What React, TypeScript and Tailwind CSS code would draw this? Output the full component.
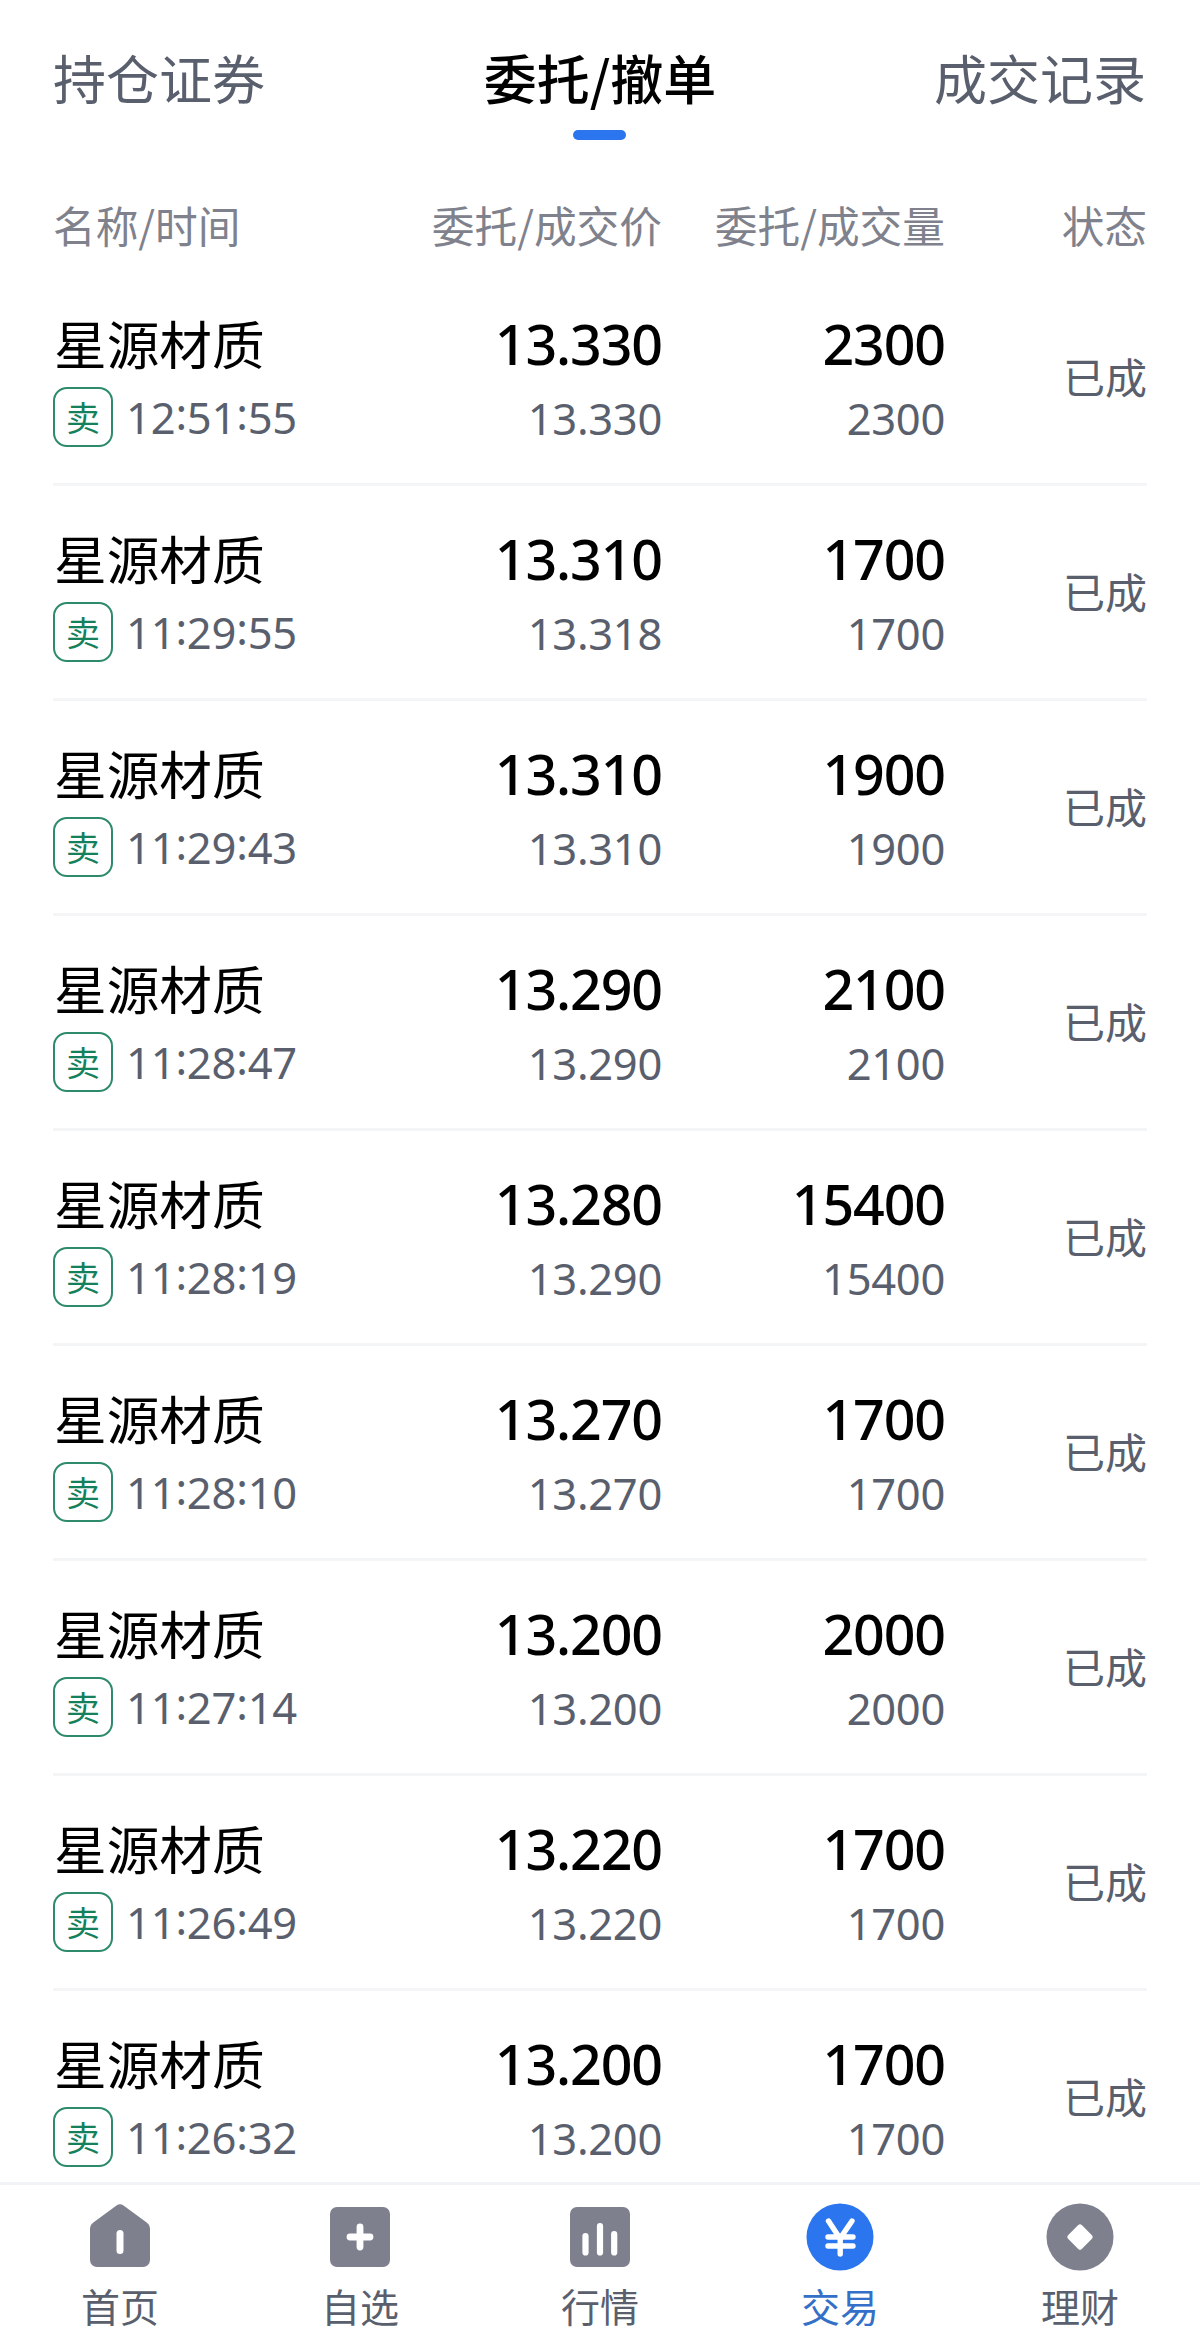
import React from 'react';

type Order = { time: string; price: string; dealPrice: string; qty: string };

const ORDERS: Order[] = [
  { time: '12:51:55', price: '13.330', dealPrice: '13.330', qty: '2300' },
  { time: '11:29:55', price: '13.310', dealPrice: '13.318', qty: '1700' },
  { time: '11:29:43', price: '13.310', dealPrice: '13.310', qty: '1900' },
  { time: '11:28:47', price: '13.290', dealPrice: '13.290', qty: '2100' },
  { time: '11:28:19', price: '13.280', dealPrice: '13.290', qty: '15400' },
  { time: '11:28:10', price: '13.270', dealPrice: '13.270', qty: '1700' },
  { time: '11:27:14', price: '13.200', dealPrice: '13.200', qty: '2000' },
  { time: '11:26:49', price: '13.220', dealPrice: '13.220', qty: '1700' },
  { time: '11:26:32', price: '13.200', dealPrice: '13.200', qty: '1700' },
];

const COLUMNS = 'grid grid-cols-[326px_283px_283px_1fr] px-[53px]';

function Time({ value }: { value: string }) {
  return (
    <span className="text-[43.5px] leading-[74px] tracking-[-0.2px] font-['Noto_Sans']">
      {value.split(':').map((part, i) => (
        <React.Fragment key={i}>
          {i > 0 && <span className="relative -top-[4px]">:</span>}
          {part}
        </React.Fragment>
      ))}
    </span>
  );
}

function Amounts({ ordered, filled }: { ordered: string; filled: string }) {
  return (
    <div className="text-right font-['Noto_Sans']">
      <div className="pt-px text-[55.5px] leading-[74px] font-medium tracking-[-1.1px] text-black">{ordered}</div>
      <div className="text-[43.5px] leading-[74px] tracking-[-0.3px]">{filled}</div>
    </div>
  );
}

function OrderRow({ order }: { order: Order }) {
  return (
    <li className="h-[215px] shrink-0">
      <div className={`${COLUMNS} h-[212px] pt-[35px]`}>
        <div>
          <div className="h-[74px] pl-px text-[52.7px] leading-[72px] text-black">星源材质</div>
          <div className="flex h-[74px] items-center">
            <span className="flex size-[60px] items-center justify-center rounded-[14px] border-2 border-[#2d8a6b] text-[34px] leading-none text-[#14805c]">
              卖
            </span>
            <span className="ml-[13px]">
              <Time value={order.time} />
            </span>
          </div>
        </div>
        <Amounts ordered={order.price} filled={order.dealPrice} />
        <Amounts ordered={order.qty} filled={order.qty} />
        <div className="flex h-[139px] items-center justify-end text-[42px]">已成</div>
      </div>
      <div className="mx-[53px] h-[3px] bg-[#f3f5f7]" />
    </li>
  );
}

const ICONS: Record<string, React.ReactNode> = {
  首页: (
    <>
      <path d="M31.5 5.600a6 6 0 0 1 7 0L62 22.700a7 7 0 0 1 3 5.600V60a7 7 0 0 1-7 7H12a7 7 0 0 1-7-7V28.300a7 7 0 0 1 3-5.600z" fill="currentColor" />
      <path d="M35 33.500v17" stroke="#fff" strokeWidth="7" strokeLinecap="round" />
    </>
  ),
  自选: (
    <>
      <rect x="5" y="7" width="60" height="60" rx="7" fill="currentColor" />
      <path d="M35 27v20M25 37h20" stroke="#fff" strokeWidth="6.800" strokeLinecap="round" />
    </>
  ),
  行情: (
    <>
      <rect x="5" y="7" width="60" height="60" rx="7" fill="currentColor" />
      <path d="M20.500 36v16.500M35 26v26.500M49.200 34v18.500" stroke="#fff" strokeWidth="6.200" strokeLinecap="round" />
    </>
  ),
  交易: (
    <>
      <circle cx="35" cy="37" r="33.500" fill="currentColor" />
      <path
        d="M23.500 21 35 38.500 47 21M35.200 38v16M23 37h25M23 46h25"
        fill="none"
        stroke="#fff"
        strokeWidth="5.400"
        strokeLinecap="round"
        strokeLinejoin="round"
      />
    </>
  ),
  理财: (
    <>
      <circle cx="35" cy="37" r="33.500" fill="currentColor" />
      <rect x="25.300" y="27.300" width="19.400" height="19.400" rx="2.500" fill="#fff" transform="rotate(45 35 37)" />
    </>
  ),
};

const NAV = ['首页', '自选', '行情', '交易', '理财'];

export default function App() {
  return (
    <div className="flex h-[2347px] w-[1200px] flex-col overflow-hidden bg-white font-['Noto_Sans_CJK_SC',sans-serif] text-[#5a5f6e]">
      <header className="grid h-[180px] shrink-0 grid-cols-3 px-[53px] text-[53px] leading-[80px]">
        <div className="pt-[37px]">持仓证券</div>
        <div className="flex flex-col items-center pt-[37px]">
          <span className="font-medium whitespace-nowrap text-black">委托/撤单</span>
          <span className="mt-[13px] h-[10px] w-[53px] rounded-full bg-[#2b75ee]" />
        </div>
        <div className="pt-[37px] pr-px text-right">成交记录</div>
      </header>

      <div className={`${COLUMNS} h-[91px] shrink-0 pt-[14px] text-[42.7px] leading-[60px] text-[#7f828d]`}>
        <div>名称/时间</div>
        <div className="text-right">委托/成交价</div>
        <div className="text-right">委托/成交量</div>
        <div className="text-right">状态</div>
      </div>

      <ul className="flex min-h-0 flex-1 flex-col overflow-hidden">
        {ORDERS.map((o) => (
          <OrderRow key={o.time} order={o} />
        ))}
      </ul>

      <nav className="grid h-[165px] shrink-0 grid-cols-5 border-t-[3px] border-[#f2f3f7] bg-white">
        {NAV.map((label) => {
          const active = label === '交易';
          return (
            <div key={label} className="flex flex-col items-center pt-[15px]">
              <svg viewBox="0 0 70 74" className={`h-[74px] w-[70px] ${active ? 'text-[#2b75ee]' : 'text-[#7e818d]'}`}>
                {ICONS[label]}
              </svg>
              <span className={`mt-[3px] text-[39px] leading-[56px] ${active ? 'text-[#3470c8]' : ''}`}>{label}</span>
            </div>
          );
        })}
      </nav>
    </div>
  );
}
